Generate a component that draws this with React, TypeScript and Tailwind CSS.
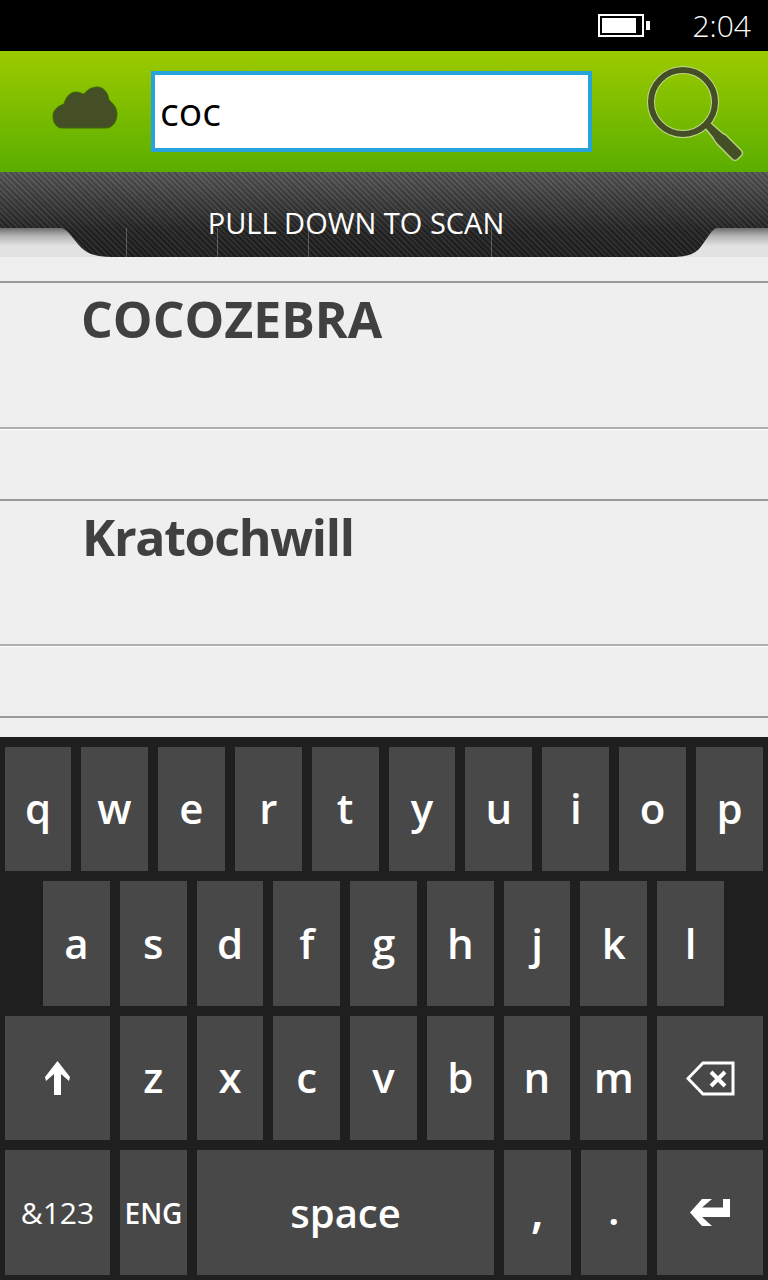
const font = "font-['Open_Sans',sans-serif]";

const ShiftIcon = () => (
  <svg width="25" height="34" viewBox="0 0 25 34" fill="#fff">
    <polygon points="12.5,0 25,16 24,20 16,13 16,34 9,34 9,13 1,20 0,16" />
  </svg>
);

const BackspaceIcon = () => (
  <svg width="49" height="35" viewBox="-1 -1 49 35" fill="none" stroke="#fff">
    <polygon points="1,16.5 16,1 46,1 46,32 16,32" strokeWidth="3" />
    <path d="M24 10l14 14M38 10l-14 14" strokeWidth="4" />
  </svg>
);

const EnterIcon = () => (
  <svg width="40" height="27" viewBox="0 0 40 27" fill="#fff">
    <polygon points="0,13.5 12,0 22,0 12,8.5 33,8.5 33,0 40,0 40,18 12,18 22,27 12,27" />
  </svg>
);

const Key = ({ children, className = 'flex-1' }: { children: React.ReactNode; className?: string }) => (
  <div className={`flex items-center justify-center bg-[#484848] text-white ${className}`}>{children}</div>
);

const Letter = ({ label, className }: { label: string; className?: string }) => (
  <Key className={className}>
    <span className="pb-[2px] text-[42px] leading-none font-[550]">{label}</span>
  </Key>
);

const ListItem = ({ title, height, titleClass = '' }: { title: string; height: string; titleClass?: string }) => (
  <>
    <div className={`${height} border-t-2 border-[#9a9a9a] pl-[81px]`}>
      <h2 className={`text-[50px] leading-[72px] font-bold text-[#404040] ${titleClass}`}>{title}</h2>
    </div>
    <div className="h-[72px] border-t-2 border-[#aeaeae] shadow-[inset_0_1px_0_#fff]" />
  </>
);

export default function App() {
  return (
    <div className={`flex h-[1280px] w-[768px] flex-col overflow-hidden bg-[#efefef] ${font}`}>
      {/* status bar */}
      <div className="flex h-[51px] items-center justify-end bg-black pr-[17px] text-white">
        <div className="flex items-center">
          <div className="h-[23px] w-[46px] border-2 border-white p-[2px]">
            <div className="h-full w-[34px] bg-white" />
          </div>
          <div className="ml-[2px] h-[9px] w-[4px] bg-white" />
        </div>
        <span className="ml-[42px] text-[30px] leading-none font-[350]">2:04</span>
      </div>

      {/* search header */}
      <div className="flex h-[121px] items-center bg-gradient-to-b from-[#9bcb00] to-[#59ae00] pl-[52px]">
        <svg width="66" height="43" viewBox="0 0 66 43" className="mb-[8px] mr-[33px]">
          <path
            d="M10 42C4 42 1 36 1 30C1 24 6 20 12 18C14 10 19 6 24 6C28 6 30 8 32 8C35 4 40 1 45 1C52 1 56 7 57 14C62 18 65 23 65 28C65 36 60 42 54 42Z"
            fill="#454f26"
            stroke="#3d6a05"
          />
        </svg>
        <div className="flex h-[81px] w-[441px] items-center border-4 border-[#27a3dc] bg-white pb-[2px] pl-[5px]">
          <span className="text-[39px] leading-none text-black">coc</span>
        </div>
        <svg width="110" height="105" viewBox="0 0 110 105" className="ml-[50px] self-start mt-[11px]">
          <circle cx="41" cy="40" r="32" fill="none" stroke="#c3d98a" strokeWidth="8" />
          <path
            d="M62 65L68 60L78 69C80 71 82 72 84 73L99 88C101 90 101 92 99 94L96 97C94 99 92 99 90 97L75 82C73 80 72 78 71 76Z"
            fill="#454f26"
            stroke="#b5d27c"
            strokeWidth="1.5"
          />
          <circle cx="41" cy="40" r="32" fill="none" stroke="#454f26" strokeWidth="6" />
        </svg>
      </div>

      {/* pull down band */}
      <div className="relative h-[85px] bg-[linear-gradient(to_bottom,#6e6e6e_56px,#b4b4b4_64px,#e2e2e2_74px,#e2e2e2_85px)]">
        <div className="flex h-full items-center justify-center bg-[repeating-linear-gradient(45deg,rgba(255,255,255,0.06)_0_2px,rgba(0,0,0,0.12)_2px_4px),linear-gradient(to_bottom,#565656,#242424_70%,#202020)] pt-[16px] pr-[56px] [clip-path:path('M0_0H768V56H716C710_59_704_72_698_78C692_83_685_85_672_85H112C100_85_90_83_84_78C76_72_70_59_62_56H0Z')]">
          <span className="text-[29px] leading-none text-white">PULL DOWN TO SCAN</span>
        </div>
        <div className="absolute top-[56px] left-[126px] h-[29px] w-px bg-white/25" />
        <div className="absolute top-[56px] left-[217px] h-[29px] w-px bg-white/25" />
        <div className="absolute top-[56px] left-[308px] h-[29px] w-px bg-white/25" />
        <div className="absolute top-[56px] left-[491px] h-[29px] w-px bg-white/25" />
      </div>

      {/* results */}
      <div className="flex-1 overflow-hidden pt-[24px]">
        <ListItem title="COCOZEBRA" height="h-[146px]" />
        <ListItem title="Kratochwill" height="h-[145px]" titleClass="ml-px tracking-[-1.3px]" />
        <div className="border-t-2 border-[#9a9a9a]" />
      </div>

      {/* keyboard */}
      <div className="flex h-[543px] flex-col gap-[10px] bg-[#1f1f1f] px-[5px] pt-[10px] pb-[5px]">
        <div className="flex h-[124px] gap-[10px]">
          {'qwertyuiop'.split('').map((k) => (
            <Letter key={k} label={k} className={k === 'q' ? 'w-[66px]' : 'flex-1'} />
          ))}
        </div>
        <div className="flex h-[125px] gap-[10px] pr-[39px] pl-[38px]">
          {'asdfghjkl'.split('').map((k) => (
            <Letter key={k} label={k} className="flex-1" />
          ))}
        </div>
        <div className="flex h-[124px] gap-[10px]">
          <Key className="w-[105px]">
            <ShiftIcon />
          </Key>
          {'zxcvbnm'.split('').map((k) => (
            <Letter key={k} label={k} className="flex-1" />
          ))}
          <Key className="w-[106px]">
            <BackspaceIcon />
          </Key>
        </div>
        <div className="flex h-[125px] gap-[10px]">
          <Key className="w-[105px]">
            <span className="text-[30px] leading-none font-medium">&amp;123</span>
          </Key>
          <Key className="w-[67px]">
            <span className="text-[28px] leading-none font-semibold">ENG</span>
          </Key>
          <Key className="w-[297px]">
            <span className="text-[40px] leading-none font-[550]">space</span>
          </Key>
          <Key>
            <span className="pb-[5px] text-[48px] leading-none font-semibold">,</span>
          </Key>
          <Key>
            <span className="pb-[8px] text-[42px] leading-none font-semibold">.</span>
          </Key>
          <Key className="w-[106px]">
            <EnterIcon />
          </Key>
        </div>
      </div>
    </div>
  );
}
